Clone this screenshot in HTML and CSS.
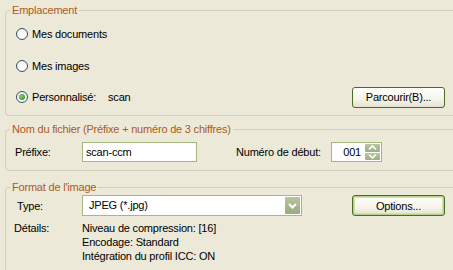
FILE: index.html
```html
<!DOCTYPE html>
<html lang="fr">
  <head>
    <meta charset="UTF-8" />
    <title>Paramètres de numérisation</title>
    <link rel="stylesheet" href="styles.css">
  </head>
  <body>
    <fieldset class="group group-location">
      <legend>Emplacement</legend>
      <div class="row row-1">
        <span class="radio"></span>
        <span class="radio-label">Mes documents</span>
      </div>
      <div class="row row-2">
        <span class="radio"></span>
        <span class="radio-label">Mes images</span>
      </div>
      <div class="row row-3">
        <span class="radio checked"></span>
        <span class="radio-label">Personnalisé:</span>
        <span class="path">scan</span>
        <button class="xp-button">Parcourir(B)...</button>
      </div>
    </fieldset>

    <fieldset class="group group-name">
      <legend>Nom du fichier (Préfixe + numéro de 3 chiffres)</legend>
      <div class="row row-name">
        <span class="field-label">Préfixe:</span>
        <span class="textbox prefix">scan-ccm</span>
        <span class="start-label">Numéro de début:</span>
        <span class="spin">
          <span class="spin-value">001</span>
          <span class="spin-buttons">
            <span class="spin-btn">
              <svg width="9" height="5" viewBox="0 0 9 5"><path d="M1 4.5 L4.5 1 L8 4.5" fill="none" stroke="#fff" stroke-width="1.6"/></svg>
            </span>
            <span class="spin-btn">
              <svg width="9" height="5" viewBox="0 0 9 5"><path d="M1 0.5 L4.5 4 L8 0.5" fill="none" stroke="#fff" stroke-width="1.6"/></svg>
            </span>
          </span>
        </span>
      </div>
    </fieldset>

    <fieldset class="group group-format">
      <legend>Format de l'image</legend>
      <div class="row row-type">
        <span class="field-label type-label">Type:</span>
        <span class="select">
          <span class="select-value">JPEG (*.jpg)</span>
          <span class="select-btn">
            <svg width="9" height="6" viewBox="0 0 9 6"><path d="M1 1 L4.5 4.5 L8 1" fill="none" stroke="#fff" stroke-width="2"/></svg>
          </span>
        </span>
        <button class="xp-button default">Options...</button>
      </div>
      <div class="details">
        <span class="field-label">Détails:</span>
        <div class="details-lines">
          <div>Niveau de compression: [16]</div>
          <div>Encodage: Standard</div>
          <div>Intégration du profil ICC: ON</div>
        </div>
      </div>
    </fieldset>
  </body>
</html>
```

FILE: styles.css
```css
body {
  margin: 0;
  padding-top: 4px;
  background: #ece9d8;
  font-family: "Liberation Sans", Arial, sans-serif;
  font-size: 11px;
  letter-spacing: -0.2px;
  color: #000;
  overflow: hidden;
}

.group {
  margin: 0 -20px 0 5px;
  padding: 0 27px 0 9px;
  border: 1px solid #d0d0bf;
  border-radius: 4px;
  min-width: 0;
}

.group legend {
  margin-left: -5px;
  padding: 0 2px;
  line-height: 12px;
  color: #ad5a1e;
}

.group-location {
  padding-top: 2px;
  padding-bottom: 3px;
}

.group-name {
  margin-top: 7px;
  padding-top: 7px;
  padding-bottom: 8px;
}

/* last group is cut by the window edge: no bottom border */
.group-format {
  margin-top: 10px;
  padding-top: 2px;
  padding-bottom: 7px;
  border-bottom: 0;
  border-radius: 4px 4px 0 0;
}

.row {
  display: flex;
  align-items: center;
}

.row-1, .row-2 {
  height: 32px;
}

.row-3 {
  height: 30px;
}

/* radio buttons */
.radio {
  width: 10px;
  height: 10px;
  margin-left: 1px;
  border: 1px solid #36506b;
  border-radius: 50%;
  background: radial-gradient(circle at 60% 65%, #fff 30%, #e6e4da 100%);
  position: relative;
}

.radio.checked::after {
  content: "";
  position: absolute;
  left: 2px;
  top: 2px;
  width: 6px;
  height: 6px;
  border-radius: 50%;
  background: radial-gradient(circle at 40% 40%, #8fd07a 0%, #3f9a2c 70%);
}

.radio-label {
  margin-left: 4px;
}

.path {
  margin-left: 12px;
}

/* buttons */
.xp-button {
  margin-left: auto;
  width: 93px;
  height: 21px;
  padding: 0;
  border: 1px solid #4b6b27;
  border-radius: 3px;
  background: linear-gradient(#fffffb 0%, #f6f4ea 60%, #e4e1cf 100%);
  font-family: inherit;
  font-size: 11px;
  letter-spacing: -0.2px;
  color: #000;
}

.xp-button.default {
  box-shadow: inset 0 0 0 1px #b6d28c, inset 0 0 0 2px #cfe2ae;
}

/* name row */
.row-name {
  height: 20px;
}

.field-label {
  width: 67px;
  flex-shrink: 0;
}

.textbox {
  box-sizing: border-box;
  height: 20px;
  border: 1px solid #a4b97f;
  background: #fff;
  display: flex;
  align-items: center;
}

.prefix {
  width: 115px;
  padding-left: 3px;
}

.start-label {
  margin-left: 39px;
  width: 95px;
}

.spin {
  box-sizing: border-box;
  display: flex;
  width: 51px;
  height: 20px;
  border: 1px solid #a4b97f;
  background: #fff;
}

.spin-value {
  flex: 1;
  text-align: right;
  padding-right: 4px;
  line-height: 18px;
}

.spin-buttons {
  display: flex;
  flex-direction: column;
  width: 15px;
  padding: 1px 1px 1px 0;
  gap: 1px;
}

.spin-btn {
  flex: 1;
  display: flex;
  align-items: center;
  justify-content: center;
  background: linear-gradient(#b9c6a0, #9eae82);
  border-radius: 1px;
}

/* format group */
.row-type {
  height: 21px;
}

.type-label {
  padding-left: 2px;
  width: 65px;
}

.select {
  box-sizing: border-box;
  display: flex;
  width: 220px;
  height: 21px;
  border: 1px solid #a4b97f;
  background: #fff;
}

.select-value {
  flex: 1;
  padding-left: 6px;
  line-height: 19px;
}

.select-btn {
  width: 15px;
  margin: 1px;
  display: flex;
  align-items: center;
  justify-content: center;
  background: linear-gradient(#b7c49d, #9aab7e);
  border-radius: 1px;
}

.details {
  display: flex;
  margin-top: 5px;
  line-height: 14px;
}

.details .field-label {
  margin-left: -1px;
  width: 68px;
}
```
